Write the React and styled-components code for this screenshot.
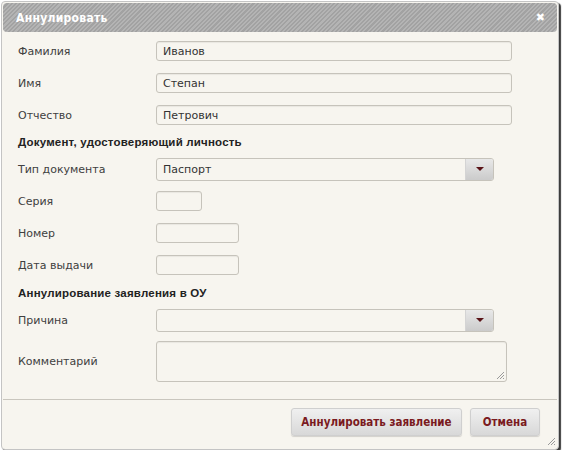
import React from 'react';
import styled, { createGlobalStyle } from 'styled-components';

const GlobalStyle = createGlobalStyle`
	body {
		margin: 0;
		background: #ffffff;
		font-family: "DejaVu Sans", "Liberation Sans", sans-serif;
	}
`;

const Dialog = styled.div`
	position: relative;
	box-sizing: border-box;
	width: 558px;
	height: 449px;
	margin: 1px 0 0 1px;
	padding: 1px;
	border: 1px solid #c4c4c4;
	border-radius: 4px;
	background: #f7f5ef;
	box-shadow: 2px 2px 1px #3c3c3c;
	display: flex;
	flex-direction: column;
`;

const TitleBar = styled.div`
	height: 29px;
	flex-shrink: 0;
	display: flex;
	align-items: center;
	justify-content: space-between;
	padding: 0 12px 0 13px;
	border-radius: 4px;
	background: repeating-linear-gradient(
		-45deg,
		#a2a2a2 0px,
		#a2a2a2 1.5px,
		#b4b4b4 1.5px,
		#b4b4b4 3px
	);
`;

const Title = styled.span`
	color: #ffffff;
	font-family: "DejaVu Sans Condensed", "Liberation Sans Narrow", sans-serif;
	font-weight: bold;
	font-size: 12px;
	letter-spacing: 0.3px;
`;

const Close = styled.span`
	color: #ffffff;
	font-family: "DejaVu Sans", sans-serif;
	font-weight: bold;
	font-size: 11px;
	line-height: 1;
`;

const Form = styled.div`
	padding: 3px 15px 0 15px;
	display: flex;
	flex-direction: column;
`;

const Row = styled.div`
	height: ${p => p.h || 32}px;
	display: flex;
	align-items: center;
`;

const Label = styled.label`
	width: 138px;
	flex-shrink: 0;
	color: #404040;
	font-size: 11px;
`;

const Heading = styled.div`
	height: ${p => p.h || 22}px;
	display: flex;
	align-items: center;
	color: #222222;
	font-family: "Liberation Sans", sans-serif;
	font-weight: bold;
	font-size: 11.5px;
	letter-spacing: 0.2px;
`;

const Input = styled.div`
	box-sizing: border-box;
	width: ${p => p.w}px;
	height: 20px;
	padding: 0 6px;
	display: flex;
	align-items: center;
	border: 1px solid #c6c3bb;
	border-radius: 3px;
	background: #f7f5ef;
	box-shadow: inset 0 1px 1px rgba(0, 0, 0, 0.06);
	color: #333333;
	font-size: 11px;
`;

const Select = styled.div`
	box-sizing: border-box;
	width: 338px;
	height: 23px;
	display: flex;
	border: 1px solid #c6c3bb;
	border-radius: 3px;
	background: #f7f5ef;
	overflow: hidden;
`;

const SelectValue = styled.div`
	flex: 1;
	padding: 0 6px;
	display: flex;
	align-items: center;
	color: #333333;
	font-size: 11px;
`;

const SelectButton = styled.div`
	width: 27px;
	display: flex;
	align-items: center;
	justify-content: center;
	background: linear-gradient(#e8e8e8, #cbcbcb);
	border-left: 1px solid #d4d4d4;

	&::after {
		content: '';
		border-left: 4px solid transparent;
		border-right: 4px solid transparent;
		border-top: 4px solid #5a1418;
	}
`;

const TextArea = styled.div`
	position: relative;
	box-sizing: border-box;
	width: 351px;
	height: 41px;
	border: 1px solid #c6c3bb;
	border-radius: 3px;
	background: #f7f5ef;
	box-shadow: inset 0 1px 1px rgba(0, 0, 0, 0.06);
`;

const Grip = styled.svg`
	position: absolute;
	right: ${p => p.r}px;
	bottom: ${p => p.b}px;
`;

const Footer = styled.div`
	margin-top: 11px;
	border-top: 1px solid #c9c6be;
	padding: 8px 17px 0 0;
	display: flex;
	justify-content: flex-end;
	gap: 8px;
`;

const Button = styled.button`
	box-sizing: border-box;
	height: 28px;
	width: ${p => p.w}px;
	padding: 0;
	border: 1px solid #cfcfcf;
	border-radius: 3px;
	background: linear-gradient(#f0f0f0, #d8d8d8);
	box-shadow: 0 1px 1px rgba(0, 0, 0, 0.15);
	color: #7a1a20;
	font-family: "DejaVu Sans Condensed", "Liberation Sans Narrow", sans-serif;
	font-weight: bold;
	font-size: 11.5px;
`;

function ResizeGrip({ r, b }) {
	return (
		<Grip r={r} b={b} width="9" height="9" viewBox="0 0 9 9">
			<path d="M1 8 L8 1 M4 8 L8 4 M7 8 L8 7" stroke="#9a9a9a" strokeWidth="1" />
		</Grip>
	);
}

export default function App() {
	return (
		<>
			<GlobalStyle />
			<Dialog>
				<TitleBar>
					<Title>Аннулировать</Title>
					<Close>✖</Close>
				</TitleBar>
				<Form>
					<Row><Label>Фамилия</Label><Input w={356}>Иванов</Input></Row>
					<Row><Label>Имя</Label><Input w={356}>Степан</Input></Row>
					<Row><Label>Отчество</Label><Input w={356}>Петрович</Input></Row>
					<Heading>Документ, удостоверяющий личность</Heading>
					<Row>
						<Label>Тип документа</Label>
						<Select><SelectValue>Паспорт</SelectValue><SelectButton /></Select>
					</Row>
					<Row><Label>Серия</Label><Input w={46} /></Row>
					<Row><Label>Номер</Label><Input w={83} /></Row>
					<Row><Label>Дата выдачи</Label><Input w={83} /></Row>
					<Heading h={24}>Аннулирование заявления в ОУ</Heading>
					<Row h={30}>
						<Label>Причина</Label>
						<Select><SelectValue /><SelectButton /></Select>
					</Row>
					<Row h={53}>
						<Label>Комментарий</Label>
						<TextArea><ResizeGrip r={1} b={1} /></TextArea>
					</Row>
				</Form>
				<Footer>
					<Button w={171}>Аннулировать заявление</Button>
					<Button w={70}>Отмена</Button>
				</Footer>
				<ResizeGrip r={2} b={3} />
			</Dialog>
		</>
	);
}
